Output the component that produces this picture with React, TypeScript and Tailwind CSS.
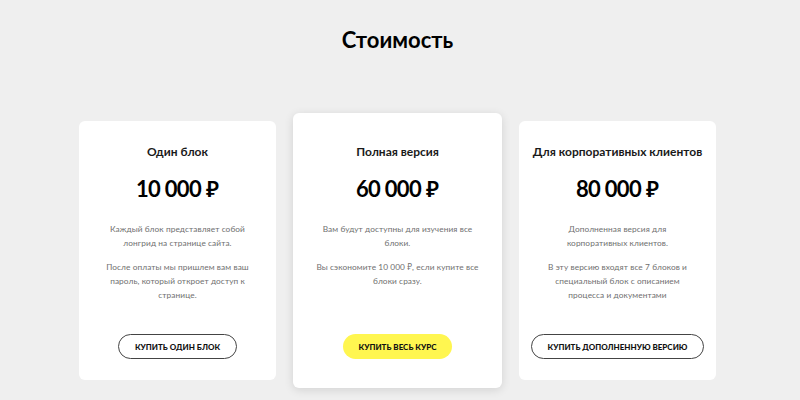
import React from "react";

const font = { fontFamily: 'Lato, "Noto Sans", sans-serif' };

type Card = {
  title: string;
  price: string;
  paras: string[];
  button: string;
  featured?: boolean;
};

const cards: Card[] = [
  {
    title: "Один блок",
    price: "10 000",
    paras: [
      "Каждый блок представляет собой лонгрид на странице сайта.",
      "После оплаты мы пришлем вам ваш пароль, который откроет доступ к странице.",
    ],
    button: "Купить один блок",
  },
  {
    title: "Полная версия",
    price: "60 000",
    paras: [
      "Вам будут доступны для изучения все блоки.",
      "Вы сэкономите 10 000 ₽, если купите все блоки сразу.",
    ],
    button: "Купить весь курс",
    featured: true,
  },
  {
    title: "Для корпоративных клиентов",
    price: "80 000",
    paras: [
      "Дополненная версия для корпоративных клиентов.",
      "В эту версию входят все 7 блоков и специальный блок с описанием процесса и документами",
    ],
    button: "Купить дополненную версию",
  },
];

function PriceCard({ c }: { c: Card }) {
  return (
    <div
      className={
        c.featured
          ? "flex flex-col items-center bg-white rounded-[6px] w-[209px] h-[275px] pt-[31px] pb-[29px] px-[20px] shadow-[0_2px_10px_rgba(0,0,0,0.12)]"
          : "flex flex-col items-center bg-white rounded-[6px] w-[197px] h-[259px] pt-[23px] pb-[21px] px-[22px]"
      }
    >
      <div className="text-[12px] leading-[16px] font-bold text-[#1a1a1a] whitespace-nowrap">
        {c.title}
      </div>
      <div className="mt-[16px] text-[22px] leading-[26px] font-bold text-black whitespace-nowrap">
        <span className="tracking-[-0.03em]">{c.price}</span>
        <span className="ml-[5px] font-semibold">₽</span>
      </div>
      <div className="mt-[20px] flex flex-col gap-[10px] text-[8.3px] leading-[14px] text-[#707070] text-center tracking-[0.01em]">
        {c.paras.map((p, i) => (
          <p key={i}>{p}</p>
        ))}
      </div>
      <div className="mt-auto">
        <button
          className={
            c.featured
              ? "h-[25px] px-[16px] rounded-full bg-[#fff650] text-[8px] font-black uppercase text-[#111] whitespace-nowrap"
              : "h-[25px] px-[16px] rounded-full border border-[#444] text-[8px] font-black uppercase text-[#111] whitespace-nowrap"
          }
          style={font}
        >
          {c.button}
        </button>
      </div>
    </div>
  );
}

export default function App() {
  return (
    <div className="w-[800px] h-[400px] bg-[#efefef] overflow-hidden" style={font}>
      <h1 className="pt-[25px] text-center text-[22px] leading-[30px] font-bold text-black pr-[5px]">
        Стоимость
      </h1>
      <div className="mt-[58px] ml-[79px] w-[637px] flex items-center gap-[17px]">
        {cards.map((c, i) => (
          <PriceCard key={i} c={c} />
        ))}
      </div>
    </div>
  );
}
